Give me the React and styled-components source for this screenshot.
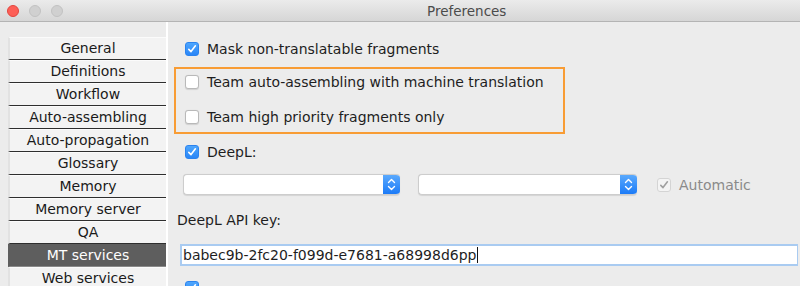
import React from "react";
import styled, { createGlobalStyle } from "styled-components";

const GlobalStyle = createGlobalStyle`
  html, body {
    margin: 0;
    padding: 0;
    background: #ececec;
  }
  body {
    font-family: "DejaVu Sans", "Liberation Sans", sans-serif;
    font-size: 14px;
    color: #1e1e1e;
  }
`;

const Window = styled.div`
  width: 800px;
  height: 286px;
  overflow: hidden;
  display: flex;
  flex-direction: column;
  background: #ececec;
`;

const TitleBar = styled.div`
  height: 21px;
  flex-shrink: 0;
  display: flex;
  align-items: center;
  background: linear-gradient(#ebebeb, #d6d6d6);
  border-bottom: 1px solid #b4b4b4;
  padding-left: 7px;
`;

const Light = styled.span`
  width: 12px;
  height: 12px;
  border-radius: 50%;
  margin-right: 10px;
  background: ${(p) => p.color};
  border: 0.5px solid ${(p) => p.ring};
  box-sizing: border-box;
`;

const Title = styled.div`
  margin-left: 354px;
  color: #4b4b4b;
  font-size: 13.5px;
`;

const Body = styled.div`
  flex: 1;
  display: flex;
  min-height: 0;
`;

const Sidebar = styled.div`
  width: 158px;
  padding: 15px 0 0 8px;
  border-right: 2px solid #ffffff;
  margin-right: 2px;
  display: flex;
  flex-direction: column;
`;

const NavItem = styled.div`
  height: 21px;
  line-height: 21px;
  text-align: center;
  background: ${(p) => (p.active ? "#5e5e5e" : "#f3f3f3")};
  color: ${(p) => (p.active ? "#ffffff" : "#1a1a1a")};
  border-top: 1px solid ${(p) => (p.active ? "#5e5e5e" : "#fbfbfb")};
  border-left: 2px solid ${(p) => (p.active ? "#5e5e5e" : "#e2e2e2")};
  border-bottom: 1px solid ${(p) => (p.active ? "#8a8a8a" : "#2e2e2e")};
  font-size: 14px;
  white-space: nowrap;
`;

const Content = styled.div`
  flex: 1;
  padding: 15px 2px 0 4px;
  display: flex;
  flex-direction: column;
`;

const Row = styled.div`
  height: 24px;
  flex-shrink: 0;
  display: flex;
  align-items: center;
  padding-left: ${(p) => p.indent ?? 11}px;
  margin-top: ${(p) => p.top ?? 0}px;
  color: ${(p) => (p.muted ? "#8a8a8a" : "#1e1e1e")};
  white-space: nowrap;
`;

const Highlight = styled.div`
  width: 387px;
  margin-top: 6px;
  border: 2px solid #f89c34;
  padding: 1px 0 3px 0;
  display: flex;
  flex-direction: column;
  gap: 11px;
`;

const Box = styled.span`
  width: 14px;
  height: 14px;
  box-sizing: border-box;
  border-radius: 3px;
  margin-right: 8px;
  flex-shrink: 0;
  display: inline-flex;
  align-items: center;
  justify-content: center;
  background: ${(p) =>
    p.disabled ? "#f4f4f4" : p.checked ? "linear-gradient(#4ea6fd, #2a86f7)" : "#ffffff"};
  border: 1px solid
    ${(p) => (p.disabled ? "#d4d4d4" : p.checked ? "#2b83ef" : "#b9b9b9")};
  box-shadow: ${(p) => (p.checked || p.disabled ? "none" : "0 0.5px 1px rgba(0,0,0,0.12)")};
`;

const Check = ({ checked, disabled }) => (
  <Box checked={checked} disabled={disabled}>
    {checked && (
      <svg width="10" height="10" viewBox="0 0 10 10">
        <path
          d="M1.8 5.4 L4 7.6 L8.4 1.8"
          fill="none"
          stroke={disabled ? "#a0a0a0" : "#ffffff"}
          strokeWidth="1.6"
          strokeLinecap="round"
          strokeLinejoin="round"
        />
      </svg>
    )}
  </Box>
);

const ComboRow = styled.div`
  display: flex;
  align-items: center;
  flex-shrink: 0;
  margin-top: 10px;
  padding-left: 9px;
  height: 21px;
`;

const Combo = styled.div`
  width: ${(p) => p.width}px;
  height: 21px;
  box-sizing: border-box;
  margin-right: ${(p) => p.gap}px;
  display: flex;
  background: #ffffff;
  border: 1px solid #cdcdcd;
  border-right: none;
  border-radius: 4px;
  box-shadow: 0 0.5px 1px rgba(0, 0, 0, 0.1);
  overflow: hidden;
`;

const ComboField = styled.div`
  flex: 1;
`;

const Stepper = styled.div`
  width: 17px;
  display: flex;
  align-items: center;
  justify-content: center;
  background: linear-gradient(#5aa9fd, #1c7bf7);
`;

const Arrows = () => (
  <svg width="9" height="13" viewBox="0 0 9 13">
    <path
      d="M1.5 4.5 L4.5 1.5 L7.5 4.5 M1.5 8.5 L4.5 11.5 L7.5 8.5"
      fill="none"
      stroke="#ffffff"
      strokeWidth="1.4"
      strokeLinecap="round"
      strokeLinejoin="round"
    />
  </svg>
);

const Label = styled.div`
  height: 22px;
  flex-shrink: 0;
  line-height: 22px;
  margin-top: 14px;
  padding-left: 3px;
`;

const KeyField = styled.div`
  margin-top: 13px;
  margin-left: 6px;
  height: 22px;
  flex-shrink: 0;
  box-sizing: border-box;
  background: #ffffff;
  border: 2px solid #a9cbf1;
  border-right-width: 1px;
  display: flex;
  align-items: center;
  padding-left: 1px;
  white-space: nowrap;
`;

const Caret = styled.span`
  display: inline-block;
  width: 1px;
  height: 16px;
  background: #111;
  margin-left: 1px;
`;

const nav = [
  "General",
  "Definitions",
  "Workflow",
  "Auto-assembling",
  "Auto-propagation",
  "Glossary",
  "Memory",
  "Memory server",
  "QA",
  "MT services",
  "Web services",
];

export default function App() {
  return (
    <>
      <GlobalStyle />
      <Window>
        <TitleBar>
          <Light color="#fd5f57" ring="#e2463f" />
          <Light color="#d0d0d0" ring="#c2c2c2" />
          <Light color="#d0d0d0" ring="#c2c2c2" />
          <Title>Preferences</Title>
        </TitleBar>
        <Body>
          <Sidebar>
            {nav.map((n) => (
              <NavItem key={n} active={n === "MT services"}>
                {n}
              </NavItem>
            ))}
          </Sidebar>
          <Content>
            <Row>
              <Check checked />
              Mask non-translatable fragments
            </Row>
            <Highlight>
              <Row indent={9}>
                <Check />
                Team auto-assembling with machine translation
              </Row>
              <Row indent={9}>
                <Check />
                Team high priority fragments only
              </Row>
            </Highlight>
            <Row top={6}>
              <Check checked />
              DeepL:
            </Row>
            <ComboRow>
              <Combo width={217} gap={18}>
                <ComboField />
                <Stepper>
                  <Arrows />
                </Stepper>
              </Combo>
              <Combo width={219} gap={20}>
                <ComboField />
                <Stepper>
                  <Arrows />
                </Stepper>
              </Combo>
              <Row indent={0} muted>
                <Check checked disabled />
                Automatic
              </Row>
            </ComboRow>
            <Label>DeepL API key:</Label>
            <KeyField>
              babec9b-2fc20-f099d-e7681-a68998d6pp
              <Caret />
            </KeyField>
            <Row top={10}>
              <Check checked />
            </Row>
          </Content>
        </Body>
      </Window>
    </>
  );
}
